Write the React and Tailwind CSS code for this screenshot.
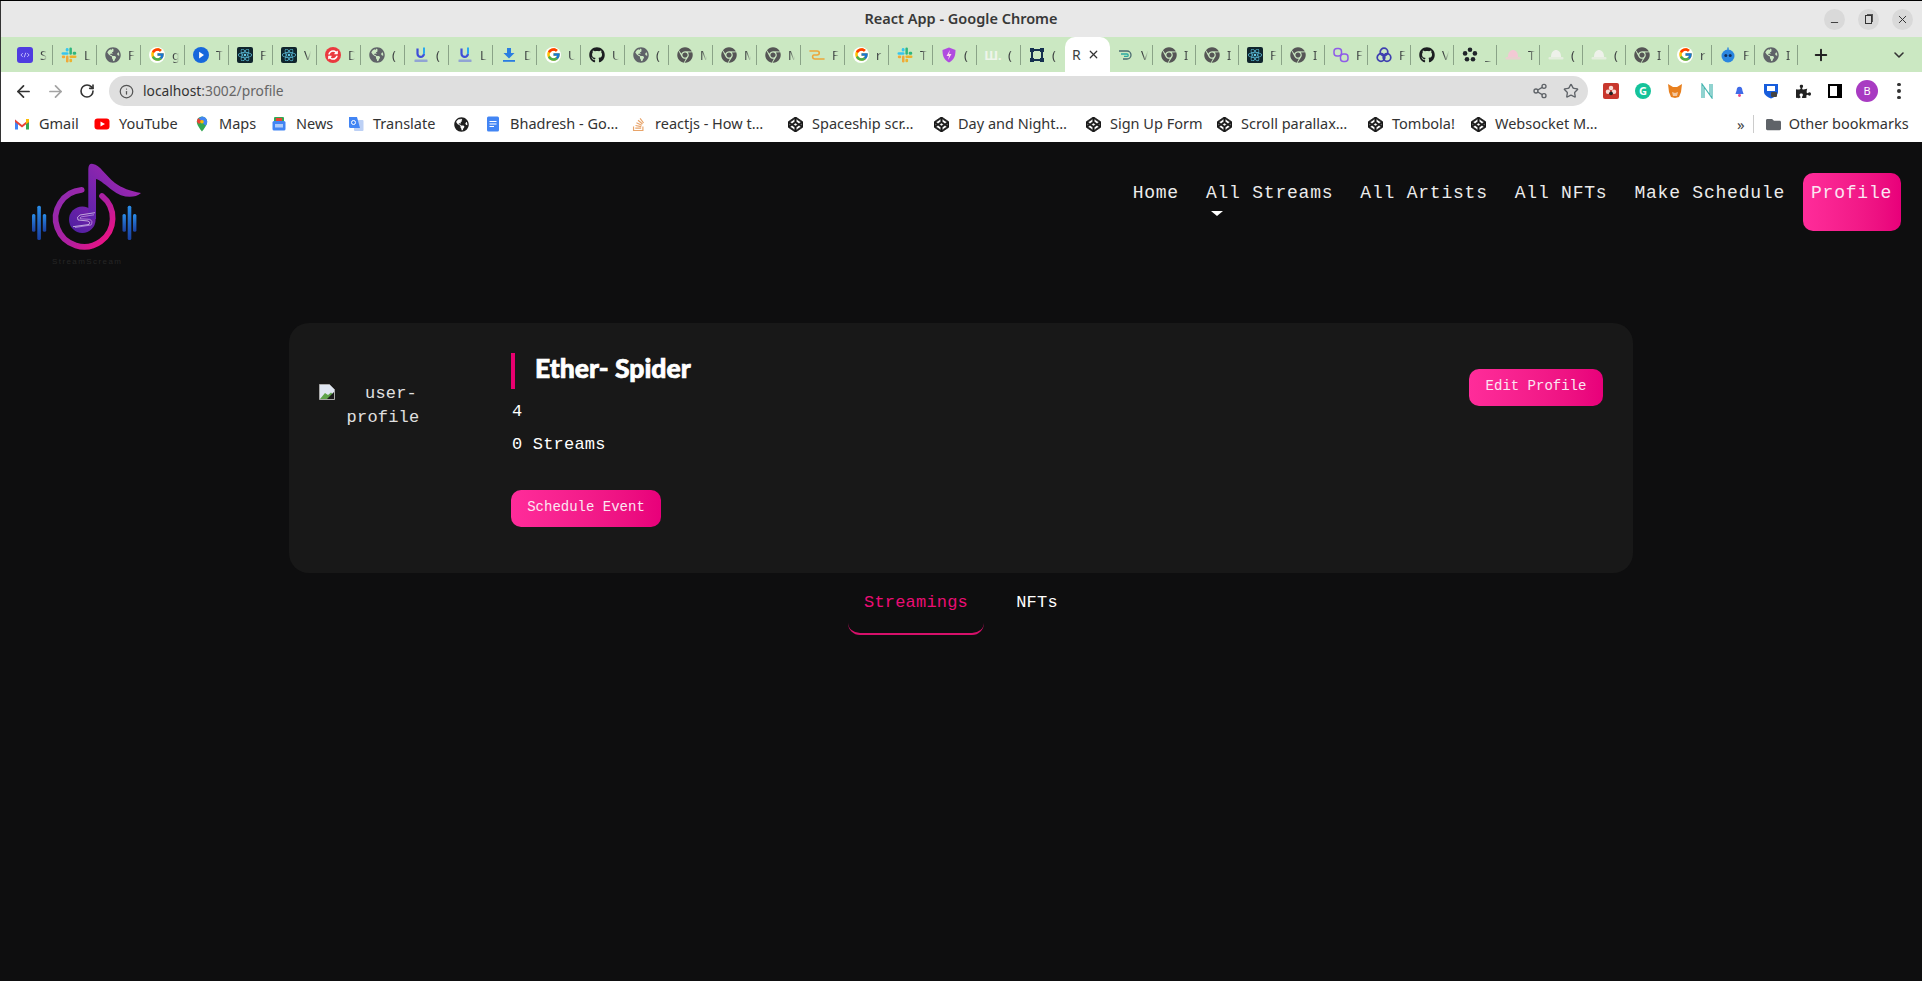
// App.jsx
import React from "react";
import {
  FaChrome,
  FaCodepen,
  FaGithub,
  FaGlobeAmericas,
  FaPuzzlePiece,
  FaReact,
  FaStackOverflow,
  FaSyncAlt,
  FaFolder,
} from "react-icons/fa";
import { FcGoogle } from "react-icons/fc";
import {
  ArrowLeft,
  ArrowRight,
  ChevronDown,
  Info,
  Minus,
  Plus,
  RotateCw,
  Share2,
  Star,
  X,
} from "lucide-react";

const uiFont = "font-['Noto_Sans',sans-serif]";
const monoFont = "font-['Liberation_Mono',monospace]";
const pinkGradient = "bg-gradient-to-r from-[#ff2c9a] to-[#e8007a]";

const Slack = () => (
  <svg viewBox="0 0 16 16" className="w-4 h-4">
    <rect x="0.500" y="5.300" width="7" height="2.500" rx="1.250" fill="#36c5f0" />
    <rect x="4.800" y="1" width="2.700" height="3.500" rx="1.250" fill="#36c5f0" />
    <rect x="8.400" y="0.500" width="2.500" height="7.300" rx="1.250" fill="#2eb67d" />
    <rect x="11.700" y="4.800" width="3.500" height="3" rx="1.250" fill="#2eb67d" />
    <rect x="8.400" y="8.600" width="7.100" height="2.500" rx="1.250" fill="#ecb22e" />
    <rect x="8.400" y="11.800" width="2.700" height="3.400" rx="1.250" fill="#ecb22e" />
    <rect x="5" y="8.600" width="2.500" height="6.900" rx="1.250" fill="#f0a83a" />
    <rect x="0.800" y="8.600" width="3.400" height="2.600" rx="1.250" fill="#f0a83a" />
  </svg>
);

const Docs = () => (
  <svg viewBox="0 0 16 16" className="w-4 h-4">
    <path d="M4.500 1.500v5.200a3.200 3.200 0 0 0 6.400 0" fill="none" stroke="#3f4ed8" strokeWidth="2.200" />
    <path d="M10 0.500l2 0v6l-2 1z" fill="#29a9ee" />
    <rect x="1.500" y="12.500" width="13" height="2.500" rx="0.500" fill="#6a76e0" opacity="0.6" />
  </svg>
);

const Hat = ({ color }) => (
  <svg viewBox="0 0 16 16" className="w-4 h-4">
    <path d="M3 10c0-5 2.500-7 5-7s5 2 5 7z" fill={color} />
    <rect x="0.500" y="10" width="15" height="2.500" rx="1" fill={color} opacity="0.7" />
  </svg>
);

const favicons = {
  code: (
    <span className="w-4 h-4 rounded-[3px] bg-[#4f3de0] flex items-center justify-center">
      <svg viewBox="0 0 16 16" className="w-3 h-3" fill="none" stroke="#c9c4ff" strokeWidth="1.200">
        <path d="M5 5.500 2.500 8 5 10.500M11 5.500 13.500 8 11 10.500M9 5 7 11" />
      </svg>
    </span>
  ),
  slack: <Slack />,
  globe: <FaGlobeAmericas className="w-4 h-4 text-[#5f6368]" />,
  google: (
    <span className="w-4 h-4 rounded-full bg-white flex items-center justify-center">
      <FcGoogle className="w-[15px] h-[15px]" />
    </span>
  ),
  play: (
    <span className="w-4 h-4 rounded-full bg-[#1668dc] flex items-center justify-center">
      <svg viewBox="0 0 16 16" className="w-3 h-3">
        <path d="M5.500 3.500 12 8l-6.500 4.500z" fill="#fff" />
      </svg>
    </span>
  ),
  react: (
    <span className="w-4 h-4 rounded-[2px] bg-[#10252d] flex items-center justify-center">
      <FaReact className="w-[14px] h-[14px] text-[#61c9e8]" />
    </span>
  ),
  sync: (
    <span className="w-4 h-4 rounded-full bg-[#ea3a3f] flex items-center justify-center">
      <FaSyncAlt className="w-[10px] h-[10px] text-white" />
    </span>
  ),
  docs: <Docs />,
  download: (
    <svg viewBox="0 0 16 16" className="w-4 h-4">
      <path d="M6 1h4v5h3.500L8 11.500 2.500 6H6z" fill="#2a7de1" />
      <rect x="2" y="13" width="12" height="1.800" fill="#2a7de1" />
    </svg>
  ),
  github: <FaGithub className="w-4 h-4 text-[#1c1e21]" />,
  chrome: <FaChrome className="w-4 h-4 text-[#555]" />,
  route: (
    <svg viewBox="0 0 16 16" className="w-4 h-4" fill="none" strokeWidth="1.600" strokeLinecap="round">
      <path d="M1 4h7c3 0 3 4 0 4H5c-2 0-2 4 1 4h9" stroke="#eda63a" />
    </svg>
  ),
  shield: (
    <svg viewBox="0 0 16 16" className="w-4 h-4">
      <path d="M8 0.500 14.500 3c0 6-1.500 10-6.500 12.500C3 13 1.500 9 1.500 3z" fill="#b04be0" />
      <path d="M9 3 5.500 9H8l-1 4 3.500-6H8z" fill="#ffd9ef" />
    </svg>
  ),
  wa: <span className={`${uiFont} text-[13px] font-bold leading-4 text-[#eef5ea]`}>Ш.</span>,
  frame: (
    <svg viewBox="0 0 16 16" className="w-4 h-4">
      <rect x="3" y="3" width="10" height="10" fill="none" stroke="#15304f" strokeWidth="2" />
      <rect x="1" y="1" width="4" height="4" fill="#15304f" />
      <rect x="11" y="1" width="4" height="4" fill="#15304f" />
      <rect x="1" y="11" width="4" height="4" fill="#15304f" />
      <rect x="11" y="11" width="4" height="4" fill="#15304f" />
    </svg>
  ),
  swirl: (
    <svg viewBox="0 0 16 16" className="w-4 h-4" fill="none" strokeWidth="1.300">
      <path d="M1 4h8a4 4 0 0 1 0 8H5" stroke="#4a6a70" />
      <path d="M3 7h6a1.200 1.200 0 0 1 0 2.400H6" stroke="#2aa9a0" />
    </svg>
  ),
  polygon: (
    <svg viewBox="0 0 16 16" className="w-4 h-4" fill="none" stroke="#8f5be8" strokeWidth="1.500">
      <rect x="1" y="1.500" width="7.500" height="7.500" rx="3" />
      <rect x="7.500" y="7" width="7.500" height="7.500" rx="3" />
    </svg>
  ),
  trio: (
    <svg viewBox="0 0 16 16" className="w-4 h-4" fill="none" stroke="#3e3fb0" strokeWidth="1.700">
      <circle cx="8" cy="5" r="3.800" />
      <circle cx="5" cy="10.500" r="3.800" />
      <circle cx="11" cy="10.500" r="3.800" />
    </svg>
  ),
  flower: (
    <svg viewBox="0 0 16 16" className="w-4 h-4" fill="#20242a">
      <circle cx="8" cy="2.800" r="2.300" />
      <circle cx="12.900" cy="6.400" r="2.300" />
      <circle cx="11" cy="12.300" r="2.300" />
      <circle cx="5" cy="12.300" r="2.300" />
      <circle cx="3.100" cy="6.400" r="2.300" />
      <circle cx="8" cy="8" r="1.500" fill="#c9e8c0" />
    </svg>
  ),
  hatPink: <Hat color="#f3c9d4" />,
  hatWhite: <Hat color="#eef1ea" />,
  robot: (
    <svg viewBox="0 0 16 16" className="w-4 h-4">
      <rect x="7.300" y="0.500" width="1.400" height="3" fill="#2a86e0" />
      <circle cx="8" cy="9" r="6.500" fill="#2a86e0" />
      <circle cx="5.800" cy="8.500" r="1.500" fill="#12305c" />
      <circle cx="10.200" cy="8.500" r="1.500" fill="#12305c" />
    </svg>
  ),
};

const tabsBefore = [
  ["code", "S"], ["slack", "L"], ["globe", "F"], ["google", "g"], ["play", "T"], ["react", "F"],
  ["react", "V"], ["sync", "D"], ["globe", "("], ["docs", "("], ["docs", "L"], ["download", "D"],
  ["google", "U"], ["github", "U"], ["globe", "("], ["chrome", "M"], ["chrome", "M"], ["chrome", "M"],
  ["route", "F"], ["google", "r"], ["slack", "T"], ["shield", "("], ["wa", "("], ["frame", "("],
];

const tabsAfter = [
  ["swirl", "V"], ["chrome", "I"], ["chrome", "I"], ["react", "F"], ["chrome", "I"], ["polygon", "F"],
  ["trio", "F"], ["github", "V"], ["flower", "_"], ["hatPink", "T"], ["hatWhite", "("], ["hatWhite", "("],
  ["chrome", "I"], ["google", "r"], ["robot", "F"], ["globe", "I"],
];

const Tab = ({ icon, letter, width, noLine }) => (
  <div className={`${width} h-[20px] shrink-0 flex items-center pl-2 ${noLine ? "" : "border-r border-[#8aa387]"}`}>
    <span className="w-4 h-4 shrink-0 flex items-center justify-center overflow-visible">{favicons[icon]}</span>
    <span className={`${uiFont} ml-[7px] w-[7px] overflow-hidden text-[13px] leading-4 text-[#3c3f41] [mask-image:linear-gradient(to_right,black_25%,transparent)]`}>
      {letter}
    </span>
  </div>
);

const TabStrip = () => (
  <div className="h-[35px] bg-[#cbe8c2] flex items-center pl-[9px] shadow-[inset_1px_0_0_#333]">
    {tabsBefore.map(([icon, letter], i) => (
      <Tab key={i} icon={icon} letter={letter} width="w-[44px]" noLine={i === tabsBefore.length - 1} />
    ))}
    <div className={`${uiFont} w-[45px] h-full self-end flex items-center shrink-0 bg-white rounded-t-[10px] pl-[7px] text-[14px] text-[#3c3f41]`}>
      R
      <X className="w-[13px] h-[13px] ml-[6px] text-[#333]" strokeWidth={2.2} />
    </div>
    {tabsAfter.map(([icon, letter], i) => (
      <Tab key={i} icon={icon} letter={letter} width="w-[43px]" />
    ))}
    <Plus className="w-[18px] h-[18px] ml-[14px] text-[#222]" strokeWidth={2.6} />
    <ChevronDown className="w-[16px] h-[16px] ml-auto mr-[15px] text-[#333]" strokeWidth={2.4} />
  </div>
);

const TitleBar = () => (
  <div className="h-[37px] relative bg-[#e8e8e8] border-t border-black flex items-center justify-center shadow-[inset_1px_0_0_#333]">
    <span className={`${uiFont} text-[14.500px] font-semibold text-[#383838]`}>React App - Google Chrome</span>
    <div className="absolute right-[9px] top-[8px] flex gap-[13px]">
      <span className="w-[21px] h-[21px] rounded-full bg-[#d9d9d9] flex items-center justify-center">
        <Minus className="w-[11px] h-[11px] mt-[5px] text-[#333]" strokeWidth={2} />
      </span>
      <span className="w-[21px] h-[21px] rounded-full bg-[#d9d9d9] flex items-center justify-center">
        <span className="w-[7px] h-[9px] border border-[#333] shadow-[1.500px_-1.500px_0_-0.500px_#555]" />
      </span>
      <span className="w-[21px] h-[21px] rounded-full bg-[#d9d9d9] flex items-center justify-center">
        <X className="w-[13px] h-[13px] text-[#333]" strokeWidth={1.8} />
      </span>
    </div>
  </div>
);

const ExtSlot = ({ children }) => <span className="w-[32px] h-[30px] shrink-0 flex items-center justify-center">{children}</span>;

const Toolbar = () => (
  <div className="h-[34px] bg-white flex items-end pl-[7px] shadow-[inset_1px_0_0_#333]">
    <ExtSlot><ArrowLeft className="w-[19px] h-[19px] text-[#333]" strokeWidth={2.2} /></ExtSlot>
    <ExtSlot><ArrowRight className="w-[19px] h-[19px] text-[#a3a3a3]" strokeWidth={2.2} /></ExtSlot>
    <ExtSlot><RotateCw className="w-[16px] h-[16px] text-[#333]" strokeWidth={2.4} /></ExtSlot>
    <div className={`${uiFont} ml-[6px] w-[1479px] h-[30px] rounded-full bg-[#dfdfdf] flex items-center pl-[10px] pr-[9px] text-[13.800px]`}>
      <Info className="w-[15px] h-[15px] text-[#555]" strokeWidth={2} />
      <span className="ml-[9px] text-[#333]">localhost</span>
      <span className="text-[#666]">:3002/profile</span>
      <Share2 className="ml-auto w-[16px] h-[16px] text-[#5f6368]" strokeWidth={2} />
      <Star className="ml-[15px] w-[16px] h-[16px] text-[#5f6368]" strokeWidth={2} />
    </div>
    <div className="ml-[7px] flex">
      <ExtSlot>
        <span className="w-4 h-4 bg-[#c8372d] rounded-[2px] flex items-center justify-center">
          <svg viewBox="0 0 16 16" className="w-3 h-3" fill="#f8dcd6">
            <circle cx="8" cy="4" r="3" />
            <circle cx="4" cy="9" r="3" />
            <circle cx="12" cy="9" r="3" />
            <circle cx="8" cy="11" r="2.500" fill="#222" />
          </svg>
        </span>
      </ExtSlot>
      <ExtSlot>
        <span className={`${uiFont} w-4 h-4 rounded-full bg-[#15c39a] flex items-center justify-center text-[11px] font-bold text-white`}>G</span>
      </ExtSlot>
      <ExtSlot>
        <svg viewBox="0 0 16 16" className="w-4 h-4">
          <path d="M1 1l5 3h4l5-3-1 8-2 5-4 1-4-1-2-5z" fill="#e8801f" />
          <path d="M5 9l3 1 3-1-1 4H6z" fill="#f3c7a0" />
        </svg>
      </ExtSlot>
      <ExtSlot>
        <svg viewBox="0 0 16 16" className="w-4 h-4" fill="none" stroke="#45b5b0" strokeWidth="1.200">
          <path d="M3 15V1l10 14V1M5 15V4M11 12V1" />
        </svg>
      </ExtSlot>
      <ExtSlot>
        <svg viewBox="0 0 16 16" className="w-[13px] h-[13px]">
          <path d="M8 2c2.500 0 3.500 2 3.500 4.500L13 11H3l1.500-4.500C4.500 4 5.500 2 8 2z" fill="#3f6be8" />
          <circle cx="8" cy="13" r="1.800" fill="#e84a8a" />
        </svg>
      </ExtSlot>
      <ExtSlot>
        <svg viewBox="0 0 16 16" className="w-4 h-4">
          <path d="M1 1h14v8c0 3-4 5.500-7 6.500C5 14.500 1 12 1 9z" fill="#175ddc" />
          <path d="M4 3h8v5H4z" fill="#fff" />
          <rect x="8" y="9" width="6" height="5" rx="1" fill="#444" />
        </svg>
      </ExtSlot>
      <ExtSlot><FaPuzzlePiece className="w-[15px] h-[15px] text-[#222]" /></ExtSlot>
      <ExtSlot><span className="w-[14px] h-[14px] border-2 border-black border-r-[5px]" /></ExtSlot>
      <ExtSlot>
        <span className={`${uiFont} w-[22px] h-[22px] rounded-full bg-[#a83bc2] flex items-center justify-center text-[11px] text-white`}>B</span>
      </ExtSlot>
      <ExtSlot>
        <span className="flex flex-col gap-[3px]">
          <span className="w-[3.500px] h-[3.500px] rounded-full bg-[#333]" />
          <span className="w-[3.500px] h-[3.500px] rounded-full bg-[#333]" />
          <span className="w-[3.500px] h-[3.500px] rounded-full bg-[#333]" />
        </span>
      </ExtSlot>
    </div>
  </div>
);

const Codepen = () => <FaCodepen className="w-[15px] h-[15px] text-[#1a1a1a] stroke-current stroke-[24]" />;

const bookmarks = [
  {
    w: "w-[80px]",
    label: "Gmail",
    icon: (
      <svg viewBox="0 0 16 16" className="w-4 h-4">
        <path d="M1 3.500v10h3V7z" fill="#4285f4" />
        <path d="M15 3.500v10h-3V7z" fill="#34a853" />
        <path d="M1 3.500 8 9l7-5.500V6L8 11.500 1 6z" fill="#ea4335" />
        <path d="M12 3h3v3l-3 2z" fill="#fbbc04" />
      </svg>
    ),
  },
  {
    w: "w-[100px]",
    label: "YouTube",
    icon: (
      <svg viewBox="0 0 16 16" className="w-4 h-4">
        <rect x="0.500" y="2.500" width="15" height="11" rx="3" fill="#f00" />
        <path d="M6.500 5.500 11 8l-4.500 2.500z" fill="#fff" />
      </svg>
    ),
  },
  {
    w: "w-[77px]",
    label: "Maps",
    icon: (
      <svg viewBox="0 0 16 16" className="w-4 h-4">
        <path d="M8 0.500a5.200 5.200 0 0 0-5.200 5.200C2.800 9.500 8 15.500 8 15.500s5.200-6 5.200-9.800A5.200 5.200 0 0 0 8 0.500z" fill="#34a853" />
        <path d="M8 0.500a5.200 5.200 0 0 1 5.200 5.200c0 1.300-.6 2.700-1.400 4L4 3z" fill="#4285f4" />
        <path d="M4 2 2.800 5.700 5 8l3-3z" fill="#ea4335" />
        <circle cx="8" cy="5.700" r="1.800" fill="#fbbc04" />
      </svg>
    ),
  },
  {
    w: "w-[77px]",
    label: "News",
    icon: (
      <svg viewBox="0 0 16 16" className="w-4 h-4">
        <rect x="3" y="1" width="10" height="5" rx="1" fill="#34a853" />
        <rect x="5" y="2" width="6" height="3" fill="#ea4335" />
        <rect x="1.500" y="5" width="13" height="9.500" rx="1.500" fill="#4285f4" />
        <rect x="4" y="8" width="8" height="3.500" fill="#aecbfa" />
      </svg>
    ),
  },
  {
    w: "w-[105px]",
    label: "Translate",
    icon: (
      <svg viewBox="0 0 16 16" className="w-4 h-4">
        <rect x="6" y="4" width="9.500" height="11" rx="1" fill="#bcd0f5" />
        <path d="M1 1h8l3 11H2.500a1.500 1.500 0 0 1-1.500-1.500z" fill="#4285f4" />
        <circle cx="5.500" cy="6.500" r="2" fill="none" stroke="#fff" strokeWidth="1" />
      </svg>
    ),
  },
  { w: "w-[32px]", icon: <FaGlobeAmericas className="w-[15px] h-[15px] text-[#1f1f1f]" /> },
  {
    w: "w-[145px]",
    label: "Bhadresh - Go…",
    icon: (
      <svg viewBox="0 0 16 16" className="w-4 h-4">
        <rect x="2" y="0.500" width="12" height="15" rx="1.500" fill="#4285f4" />
        <path d="M4.500 5.500h7M4.500 8h7M4.500 10.500h4.500" stroke="#fff" strokeWidth="1.200" />
      </svg>
    ),
  },
  { w: "w-[157px]", label: "reactjs - How t…", icon: <FaStackOverflow className="w-[15px] h-[15px] text-[#e8a46a]" /> },
  { w: "w-[146px]", label: "Spaceship scr…", icon: <Codepen /> },
  { w: "w-[152px]", label: "Day and Night…", icon: <Codepen /> },
  { w: "w-[131px]", label: "Sign Up Form", icon: <Codepen /> },
  { w: "w-[151px]", label: "Scroll parallax…", icon: <Codepen /> },
  { w: "w-[104px]", label: "Tombola!", icon: <Codepen /> },
  { w: "w-[125px]", label: "Websocket M…", icon: <Codepen /> },
];

const BookmarksBar = () => (
  <div className={`${uiFont} h-[36px] bg-white flex items-center pl-[14px] text-[14.500px] text-[#333] shadow-[inset_1px_0_0_#333]`}>
    {bookmarks.map((b, i) => (
      <div key={i} className={`${b.w} shrink-0 flex items-center gap-[9px] whitespace-nowrap`}>
        <span className="w-4 h-4 flex items-center justify-center">{b.icon}</span>
        {b.label && <span>{b.label}</span>}
      </div>
    ))}
    <span className="ml-[141px] text-[15px] text-[#444]">»</span>
    <span className="ml-[8px] h-[18px] border-l border-[#ccc]" />
    <FaFolder className="ml-[12px] w-[15px] h-[15px] text-[#5f6368]" />
    <span className="ml-[8px]">Other bookmarks</span>
  </div>
);

const Logo = () => (
  <svg viewBox="0 0 200 130" className="w-[200px] h-[130px] mt-[3px] shrink-0">
    <defs>
      <linearGradient id="ring" gradientUnits="userSpaceOnUse" x1="58" y1="50" x2="112" y2="98">
        <stop offset="0" stopColor="#8f2bb0" />
        <stop offset="0.55" stopColor="#b01fa0" />
        <stop offset="1" stopColor="#f5107f" />
      </linearGradient>
      <linearGradient id="flag" gradientUnits="userSpaceOnUse" x1="88" y1="70" x2="135" y2="30">
        <stop offset="0" stopColor="#5f22ac" />
        <stop offset="1" stopColor="#a828b0" />
      </linearGradient>
      <linearGradient id="ball" x1="0" y1="1" x2="1" y2="0">
        <stop offset="0" stopColor="#4a1fa0" />
        <stop offset="1" stopColor="#7a22ac" />
      </linearGradient>
      <linearGradient id="bar" x1="0" y1="0" x2="0" y2="1">
        <stop offset="0" stopColor="#2a8de8" />
        <stop offset="1" stopColor="#1a3fa0" />
      </linearGradient>
    </defs>
    <path d="M81.700 44.800A28.500 28.500 0 1 0 102 51" fill="none" stroke="url(#ring)" strokeWidth="5.700" strokeLinecap="round" />
    <circle cx="82.300" cy="74.700" r="13.300" fill="url(#ball)" />
    <path d="M88.300 24Q88.500 18 93 19C100 20 105 30 115 38C122 43 130 46 141 48C134 54 122 53 112 45C107 41 100 35 96 34L96 74L88.300 74Z" fill="url(#flag)" />
    <path d="M95 67.700L80 70Q76 72 78 75L88 76Q91 77 89 79.500L73 81.700" fill="none" stroke="#fff" strokeWidth="0.600" />
    <path d="M94 69.800L81.500 71.800Q79 73 80.500 73.800L89.500 74.300Q93.500 76 91 80L75 82.500" fill="none" stroke="#f0d8ff" strokeWidth="0.500" />
    <rect x="32" y="69" width="3.400" height="17.700" rx="1.500" fill="url(#bar)" />
    <rect x="37.300" y="60.700" width="3.600" height="34.300" rx="1.500" fill="url(#bar)" />
    <rect x="42.800" y="69" width="3.400" height="17.700" rx="1.500" fill="url(#bar)" />
    <rect x="122.500" y="69" width="3.400" height="17.700" rx="1.500" fill="url(#bar)" />
    <rect x="127.700" y="60.700" width="3.600" height="34.300" rx="1.500" fill="url(#bar)" />
    <rect x="133" y="69" width="3.400" height="17.700" rx="1.500" fill="url(#bar)" />
    <text x="52" y="119" fontSize="8" textLength="69" fontFamily="Liberation Sans, sans-serif" fill="#262626">
      StreamScream
    </text>
  </svg>
);

const navLinks = ["Home", "All Streams", "All Artists", "All NFTs", "Make Schedule"];

const Navbar = () => (
  <header className="h-[181px] flex justify-between items-start pr-[21px]">
    <Logo />
    <nav className={`${monoFont} mt-[31px] flex gap-[9px] text-[18px] leading-6 tracking-[0.78px] text-[#ececec]`}>
      {navLinks.map((link) => (
        <div key={link} className="px-[9px] pt-[8px]">
          <div>{link}</div>
          {link === "All Streams" && (
            <div className="mt-[6px] ml-[5px] w-0 h-0 border-x-[6px] border-t-[5px] border-x-transparent border-t-white" />
          )}
        </div>
      ))}
      <div className={`${pinkGradient} w-[98px] h-[58px] rounded-[10px] px-[8px] pt-[8px] text-[#fbe6f2]`}>Profile</div>
    </nav>
  </header>
);

const BrokenImage = () => (
  <div className="w-[128px] mt-[29px] shrink-0 text-center text-[17px] leading-6 tracking-[0.2px] text-[#e0e0e0]">
    <svg viewBox="0 0 16 16" className="float-left w-4 h-4 mt-[2px]">
      <path d="M0.500 0.500h10l5 5v10h-15z" fill="#dfe6f2" stroke="#a9a9a9" />
      <path d="M1 15l5-6 3 2 3-2.500 3 3V15z" fill="#5ea34a" />
      <path d="M8 15l7-7v7z" fill="#1a1a1a" />
    </svg>
    user-profile
  </div>
);

const ProfileCard = () => (
  <section className={`${monoFont} mx-auto w-[1344px] h-[250px] rounded-[20px] bg-[#181818] p-[30px] flex`}>
    <BrokenImage />
    <div className="ml-[64px] text-[17px] leading-6 text-white">
      <h1 className="h-[36px] border-l-4 border-[#e8006f] pl-[20px] pb-[6px] flex items-center font-['Lato',sans-serif] font-black text-[26.500px] [-webkit-text-stroke:0.7px_white]">
        Ether- Spider
      </h1>
      <p className="mt-[11px] pl-px tracking-[0.2px]">4</p>
      <p className="mt-[9px] pl-px tracking-[0.2px]">0 Streams</p>
      <button className={`${pinkGradient} mt-[33px] w-[150px] h-[37px] pb-[3px] rounded-[10px] text-[14px] text-[#fbe6f2]`}>
        Schedule Event
      </button>
    </div>
    <button className={`${pinkGradient} ml-auto mt-[16px] w-[134px] h-[37px] pb-[3px] rounded-[10px] text-[14px] text-[#fbe6f2]`}>
      Edit Profile
    </button>
  </section>
);

const ProfileTabs = () => (
  <div className={`${monoFont} mt-[2px] flex justify-center gap-[16px] text-[17px] leading-6 tracking-[0.2px]`}>
    <div className="w-[136px] h-[60px] pt-[16px] text-center text-[#ea0d74] border-b-2 border-[#d6106a] rounded-b-[12px]">
      Streamings
    </div>
    <div className="w-[74px] h-[60px] pt-[16px] text-center text-white">NFTs</div>
  </div>
);

export default function App() {
  return (
    <div className="h-screen flex flex-col overflow-hidden bg-[#0e0e0f]">
      <TitleBar />
      <TabStrip />
      <Toolbar />
      <BookmarksBar />
      <main className="flex-1">
        <Navbar />
        <ProfileCard />
        <ProfileTabs />
      </main>
    </div>
  );
}
